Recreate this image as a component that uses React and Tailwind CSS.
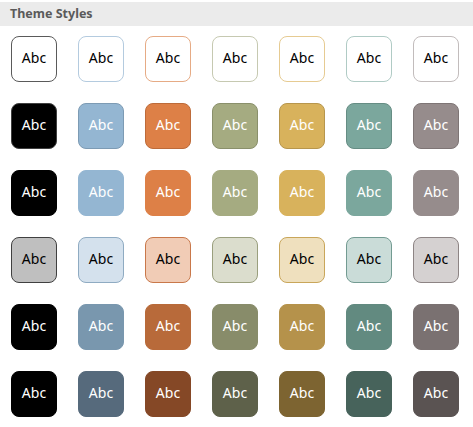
import React from 'react'

const rows = [
    [
        'bg-white border-[#5a5a5a] text-black',
        'bg-white border-[#b4cbdf] text-black',
        'bg-white border-[#e6ab85] text-black',
        'bg-white border-[#c6c9b1] text-black',
        'bg-white border-[#e6cb92] text-black',
        'bg-white border-[#b0cbc5] text-black',
        'bg-white border-[#c2bcbc] text-black',
    ],
    [
        'bg-black border-[#404040] text-white',
        'bg-[#94b6d2] border-[#7d9bb4] text-white',
        'bg-[#dd8047] border-[#bd6b3a] text-white',
        'bg-[#a5ab81] border-[#8a906b] text-white',
        'bg-[#d8b25c] border-[#b7964d] text-white',
        'bg-[#7ba79d] border-[#668d84] text-white',
        'bg-[#968c8c] border-[#7e7575] text-white',
    ],
    [
        'bg-black border-black text-white',
        'bg-[#94b6d2] border-[#94b6d2] text-white',
        'bg-[#dd8047] border-[#dd8047] text-white',
        'bg-[#a5ab81] border-[#a5ab81] text-white',
        'bg-[#d8b25c] border-[#d8b25c] text-white',
        'bg-[#7ba79d] border-[#7ba79d] text-white',
        'bg-[#968c8c] border-[#968c8c] text-white',
    ],
    [
        'bg-[#bfbfbf] border-[#404040] text-black',
        'bg-[#d4e1ed] border-[#8fabc2] text-black',
        'bg-[#f1ccb6] border-[#c9784a] text-black',
        'bg-[#dbddcd] border-[#9a9f7d] text-black',
        'bg-[#efe0be] border-[#c9a65a] text-black',
        'bg-[#cadcd8] border-[#739b92] text-black',
        'bg-[#d5d1d1] border-[#8d8484] text-black',
    ],
    [
        'bg-black border-black text-white',
        'bg-[#7997ae] border-[#7997ae] text-white',
        'bg-[#b86a3a] border-[#b86a3a] text-white',
        'bg-[#888c6a] border-[#888c6a] text-white',
        'bg-[#b5924b] border-[#b5924b] text-white',
        'bg-[#628a80] border-[#628a80] text-white',
        'bg-[#7a7171] border-[#7a7171] text-white',
    ],
    [
        'bg-black border-black text-white',
        'bg-[#566a7c] border-[#566a7c] text-white',
        'bg-[#854826] border-[#854826] text-white',
        'bg-[#5e614a] border-[#5e614a] text-white',
        'bg-[#7d6431] border-[#7d6431] text-white',
        'bg-[#47635b] border-[#47635b] text-white',
        'bg-[#5a5352] border-[#5a5352] text-white',
    ],
]

export default function App() {
    return (
        <div className="w-[473px] h-[427px] bg-white pt-[2px] font-['Noto_Sans','Open_Sans',sans-serif]">
            <div className="h-[24px] bg-[#ebebeb] flex items-center pl-[10px] text-[12.5px] font-bold text-[#5a5a5a]">
                Theme Styles
            </div>
            <div className="grid grid-cols-[repeat(7,46px)] gap-[21px] pl-[11px] pt-[10px]">
                {rows.flat().map((cls, idx) => (
                    <div
                        key={idx}
                        className={`w-[46px] h-[46px] rounded-[8px] border flex items-center justify-center pb-[3px] text-[14px] ${cls}`}
                    >
                        Abc
                    </div>
                ))}
            </div>
        </div>
    )
}
